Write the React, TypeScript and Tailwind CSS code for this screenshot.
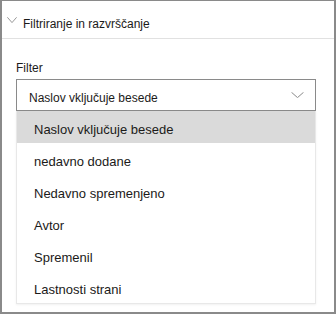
import React from "react";

const items = [
  "Naslov vključuje besede",
  "nedavno dodane",
  "Nedavno spremenjeno",
  "Avtor",
  "Spremenil",
  "Lastnosti strani",
];

function Chevron({ className }: { className?: string }) {
  return (
    <svg className={className} viewBox="0 0 13 6" fill="none" preserveAspectRatio="none">
      <path d="M0.5 0.3 L6.5 5.6 L12.5 0.3" stroke="currentColor" strokeWidth="1" />
    </svg>
  );
}

export default function App() {
  return (
    <div
      className="w-[336px] h-[314px] bg-white border-[#8a8a8a] border-t border-l-2 border-r-2 border-b-2 overflow-hidden text-[#1b1a19]"
      style={{ fontFamily: '"Liberation Sans", Arial, sans-serif' }}
    >
      <div className="h-[38px] flex items-start border-b border-[#e1e1e1]">
        <Chevron className="w-[10px] h-[6px] ml-[5px] mt-[16px] text-[#8a8a8a]" />
        <span className="ml-[6px] mt-[16px] text-[12px] leading-[14px]">Filtriranje in razvrščanje</span>
      </div>
      <div className="pl-[14px] pr-[18px] pt-[22px]">
        <div className="text-[12px] leading-[14px]">Filter</div>
        <div className="mt-[4px] h-[32px] border border-[#8a8a8a] flex items-start justify-between pl-[12px] pr-[11px]">
          <span className="mt-[11px] text-[12px] leading-[14px]">Naslov vključuje besede</span>
          <Chevron className="w-[13px] h-[6px] mt-[12px] text-[#8a8a8a]" />
        </div>
        <div className="border border-t-0 border-[#e8e8e8] shadow-[0_1px_2px_rgba(0,0,0,0.06)]">
          {items.map((t, i) => (
            <div
              key={t}
              className={`h-[32px] flex items-start pt-[11px] pl-[17px] text-[13px] leading-[16px] ${i === 0 ? "bg-[#dadada]" : ""}`}
            >
              {t}
            </div>
          ))}
        </div>
      </div>
    </div>
  );
}
